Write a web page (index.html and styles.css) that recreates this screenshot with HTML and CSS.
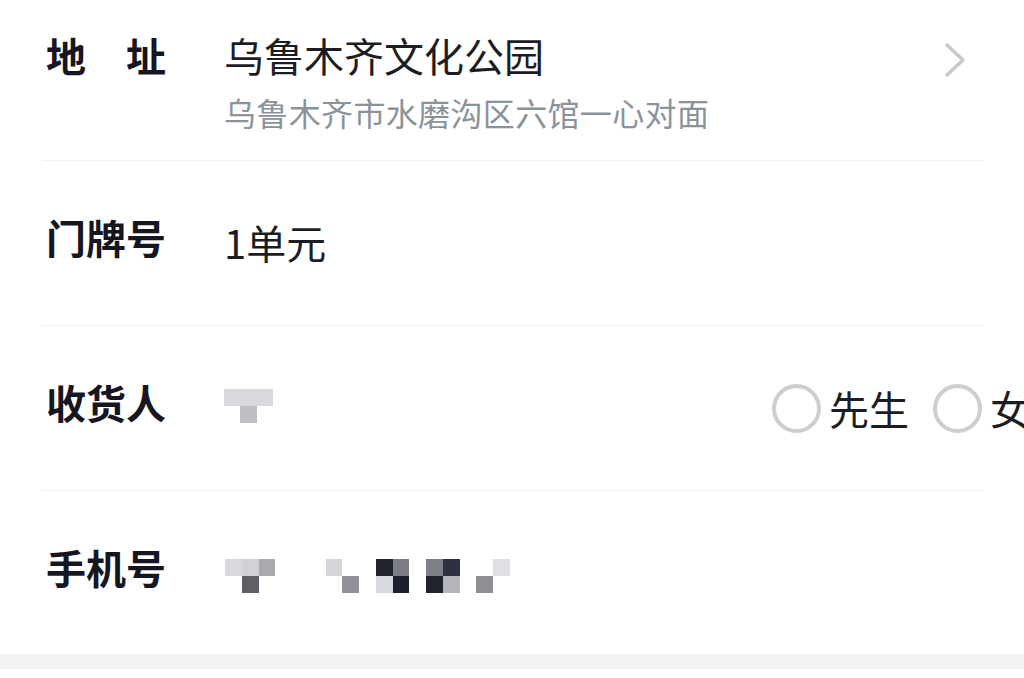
FILE: index.html
```html
<!DOCTYPE html>
<html lang="zh-CN">
<head>
<meta charset="utf-8">
<title>收货地址</title>
<link rel="stylesheet" href="styles.css">
</head>
<body>
<div class="page">
  <div class="form">
    <div class="row row-first">
      <div class="label">地<span class="gap"></span>址</div>
      <div class="addr">
        <div class="value">乌鲁木齐文化公园</div>
        <div class="sub">乌鲁木齐市水磨沟区六馆一心对面</div>
      </div>
      <svg class="chev" width="24" height="36" viewBox="0 0 24 36"><polyline points="4,3 20,18 4,33" fill="none" stroke="#c9c9cd" stroke-width="3.6" stroke-linecap="round" stroke-linejoin="round"/></svg>
    </div>
    <div class="row">
      <div class="label">门牌号</div>
      <div class="value value-door">1单元</div>
    </div>
    <div class="row">
      <div class="label">收货人</div>
      <div class="name">
        <div class="mosaic mosaic-name">
          <i class="c" style="grid-column:1;grid-row:1;background:#d9d9dd"></i>
          <i class="c" style="grid-column:2;grid-row:1;background:#d9d9dd"></i>
          <i class="c" style="grid-column:3;grid-row:1;background:#d9d9dd"></i>
          <i class="c" style="grid-column:2;grid-row:2;background:#bfbfc3"></i>
        </div>
      </div>
      <div class="radios">
        <div class="radio"><span class="circle"></span><span class="rtext">先生</span></div>
        <div class="radio"><span class="circle"></span><span class="rtext">女士</span></div>
      </div>
    </div>
    <div class="row row-last">
      <div class="label">手机号</div>
      <div class="mosaic mosaic-phone">
        <i class="c" style="grid-column:1;grid-row:1;background:#d9d9dd"></i>
        <i class="c" style="grid-column:2;grid-row:1;background:#d2d2d6"></i>
        <i class="c" style="grid-column:3;grid-row:1;background:#a9a9af"></i>
        <i class="c" style="grid-column:2;grid-row:2;background:#5f5f67"></i>
        <i class="c" style="grid-column:7;grid-row:1;background:#d6d6da"></i>
        <i class="c" style="grid-column:8;grid-row:2;background:#909097"></i>
        <i class="c" style="grid-column:10;grid-row:1;background:#20222e"></i>
        <i class="c" style="grid-column:11;grid-row:1;background:#7c7c84"></i>
        <i class="c" style="grid-column:10;grid-row:2;background:#d9dae0"></i>
        <i class="c" style="grid-column:11;grid-row:2;background:#1d1f2c"></i>
        <i class="c" style="grid-column:13;grid-row:1;background:#7f7f87"></i>
        <i class="c" style="grid-column:14;grid-row:1;background:#2e3040"></i>
        <i class="c" style="grid-column:13;grid-row:2;background:#20222c"></i>
        <i class="c" style="grid-column:14;grid-row:2;background:#b5b5bb"></i>
        <i class="c" style="grid-column:16;grid-row:2;background:#8e8e94"></i>
        <i class="c" style="grid-column:17;grid-row:1;background:#e0e0e4"></i>
      </div>
    </div>
  </div>
  <div class="band"></div>
</div>
</body>
</html>
```

FILE: styles.css
```css
html, body {
  margin: 0;
  padding: 0;
  background: #ffffff;
  overflow: hidden;
  width: 1024px;
  height: 678px;
}
body {
  font-family: "Noto Sans CJK SC", "Noto Sans", sans-serif;
  color: #1c1d24;
}
.page {
  width: 1024px;
  height: 678px;
  overflow: hidden;
}
.form {
  margin: 0 40px 0 42px;
}
.row {
  box-sizing: border-box;
  height: 165px;
  display: flex;
  align-items: flex-start;
  padding: 48px 0 0 4px;
  border-bottom: 1px solid #efeff2;
  white-space: nowrap;
}
.row-first {
  height: 161px;
  padding-top: 27px;
}
.row-last {
  height: 163px;
  border-bottom: none;
}
.label {
  flex: 0 0 178px;
  font-size: 40px;
  line-height: 56px;
  font-weight: 700;
  color: #15161f;
  display: flex;
}
.gap {
  width: 40px;
}
.addr {
  flex: 1;
}
.value {
  font-size: 40px;
  line-height: 56px;
  color: #1c1d24;
}
.value-door {
  margin-top: 5px;
}
.sub {
  margin-top: 7px;
  font-size: 32px;
  line-height: 44px;
  letter-spacing: 0.35px;
  color: #8a929b;
}
.chev {
  margin: 15px 17px 0 0;
  flex: 0 0 auto;
}
.name {
  flex: 0 0 548px;
  padding-top: 15px;
}
.mosaic {
  display: grid;
  grid-template-columns: repeat(17, 16.75px);
  grid-template-rows: repeat(2, 16.8px);
}
.mosaic-name {
  grid-template-columns: repeat(3, 16.4px);
  grid-template-rows: 17px 17px;
}
.mosaic-phone {
  margin-top: 20px;
  margin-left: 1px;
}
.c {
  display: block;
}
.radios {
  display: flex;
  margin-top: 9px;
}
.radio {
  display: flex;
  align-items: center;
  margin-right: 24px;
}
.circle {
  box-sizing: border-box;
  width: 49px;
  height: 49px;
  border: 4px solid #cdcdd2;
  border-radius: 50%;
  margin-right: 8px;
}
.rtext {
  font-size: 40px;
  line-height: 50px;
  color: #1c1d24;
}
.band {
  height: 15px;
  background: #f2f3f5;
}
```
